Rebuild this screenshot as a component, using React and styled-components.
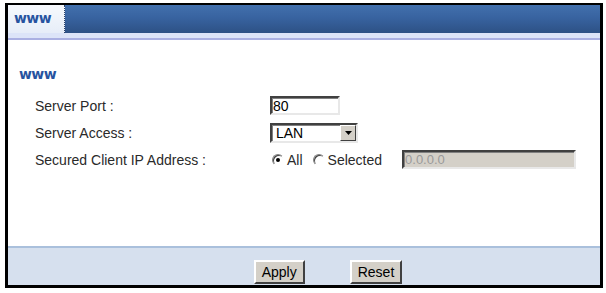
import React from 'react';
import styled, { createGlobalStyle } from 'styled-components';

const GlobalStyle = createGlobalStyle`
  html, body {
    margin: 0;
    padding: 0;
    background: #fff;
  }
  body {
    font-family: "Liberation Sans", Arial, sans-serif;
  }
`;

const App = () => {
  return (
    <>
      <GlobalStyle />
      <Frame>
        <TabBar>
          <Tab>www</Tab>
        </TabBar>
        <TabStrip />

        <Content>
          <SectionTitle>www</SectionTitle>
          <Form>
            <Label>Server Port :</Label>
            <Field>
              <TextInput defaultValue="80" />
            </Field>

            <Label>Server Access :</Label>
            <Field>
              <Select>
                <SelectValue>LAN</SelectValue>
                <SelectArrow>
                  <svg width="7" height="4" viewBox="0 0 7 4">
                    <path d="M0 0h7L3.5 4z" fill="#000" />
                  </svg>
                </SelectArrow>
              </Select>
            </Field>

            <Label>Secured Client IP Address :</Label>
            <Field>
              <RadioOption>
                <Radio checked />
                All
              </RadioOption>
              <RadioOption>
                <Radio />
                Selected
              </RadioOption>
              <IpInput disabled defaultValue="0.0.0.0" />
            </Field>
          </Form>
        </Content>

        <Footer>
          <Button>Apply</Button>
          <Button>Reset</Button>
        </Footer>
      </Frame>
    </>
  );
};

// Styled Components
const Frame = styled.div`
  box-sizing: border-box;
  width: 598px;
  height: 285px;
  margin: 3px 0 0 5px;
  border: 3px solid #000;
  border-top-width: 2px;
  display: flex;
  flex-direction: column;
  background: #fff;
`;

const TabBar = styled.div`
  height: 28px;
  display: flex;
  background: linear-gradient(180deg, #4270ad 0%, #3863a0 45%, #2d5185 100%);
`;

const Tab = styled.div`
  width: 57px;
  box-sizing: border-box;
  padding: 5px 0 0 6px;
  background: linear-gradient(180deg, #f7f9fd 0%, #e6edf8 100%);
  border-right: 1px dotted #2b416a;
  font-family: "DejaVu Sans", Verdana, sans-serif;
  font-weight: 700;
  font-size: 14px;
  letter-spacing: -0.6px;
  color: #2753a0;
`;

const TabStrip = styled.div`
  height: 5px;
  background: #dce4f8;
  border-bottom: 2px solid #aab0e2;
`;

const Content = styled.div`
  flex: 1;
  padding: 26px 0 0 11px;
`;

const SectionTitle = styled.div`
  font-family: "DejaVu Sans", Verdana, sans-serif;
  font-weight: 700;
  font-size: 14px;
  letter-spacing: -0.6px;
  color: #2753a0;
  margin-bottom: 10px;
`;

const Form = styled.div`
  display: grid;
  grid-template-columns: 235px 1fr;
  grid-auto-rows: 27px;
  align-items: center;
  padding-left: 16px;
`;

const Label = styled.div`
  font-size: 14px;
  color: #2a2a2a;
`;

const Field = styled.div`
  display: flex;
  align-items: center;
`;

const sunken = `
  border-style: solid;
  border-width: 2px;
  border-color: #404040 #e8e8e8 #e8e8e8 #404040;
  box-shadow: inset 1px 1px 0 #808080;
`;

const TextInput = styled.input`
  box-sizing: border-box;
  width: 70px;
  height: 19px;
  padding: 0 1px;
  ${sunken}
  font-family: "Liberation Sans", Arial, sans-serif;
  font-size: 14px;
  color: #000;
  background: #fff;
  outline: none;
`;

const Select = styled.div`
  box-sizing: border-box;
  width: 88px;
  height: 20px;
  display: flex;
  align-items: center;
  ${sunken}
  background: #fff;
`;

const SelectValue = styled.span`
  flex: 1;
  padding-left: 4px;
  font-size: 14px;
  color: #000;
`;

const SelectArrow = styled.span`
  box-sizing: border-box;
  width: 16px;
  height: 16px;
  display: flex;
  align-items: center;
  justify-content: center;
  background: #d4d0c8;
  border-style: solid;
  border-width: 1px;
  border-color: #fff #404040 #404040 #fff;
`;

const RadioOption = styled.label`
  display: flex;
  align-items: center;
  gap: 3px;
  font-size: 14px;
  color: #2a2a2a;
  margin-right: 8px;
`;

const Radio = styled.span`
  box-sizing: border-box;
  width: 12px;
  height: 12px;
  margin-left: 2px;
  border-radius: 50%;
  border: 1px solid;
  border-color: #808080 #fff #fff #808080;
  background: #fff;
  box-shadow: inset 1px 1px 0 #404040;
  display: flex;
  align-items: center;
  justify-content: center;

  &::after {
    content: '';
    width: 4px;
    height: 4px;
    border-radius: 50%;
    background: ${props => (props.checked ? '#000' : 'transparent')};
  }
`;

const IpInput = styled.input`
  box-sizing: border-box;
  width: 174px;
  height: 19px;
  margin-left: 12px;
  padding: 0 1px;
  ${sunken}
  font-family: "Liberation Sans", Arial, sans-serif;
  font-size: 13px;
  color: #9a9a9a;
  background: #d4d0c8;
  outline: none;
`;

const Footer = styled.div`
  height: 39px;
  box-sizing: border-box;
  border-top: 2px solid #aac0dc;
  background: #d6e0ee;
  display: flex;
  justify-content: center;
  align-items: flex-start;
  gap: 45px;
  padding: 12px 0 0 48px;
`;

const Button = styled.button`
  box-sizing: border-box;
  height: 24px;
  padding: 0 6px;
  background: #d4d0c8;
  border-style: solid;
  border-width: 2px;
  border-color: #fff #404040 #404040 #fff;
  font-family: "Liberation Sans", Arial, sans-serif;
  font-size: 14px;
  color: #000;
`;

export default App;
